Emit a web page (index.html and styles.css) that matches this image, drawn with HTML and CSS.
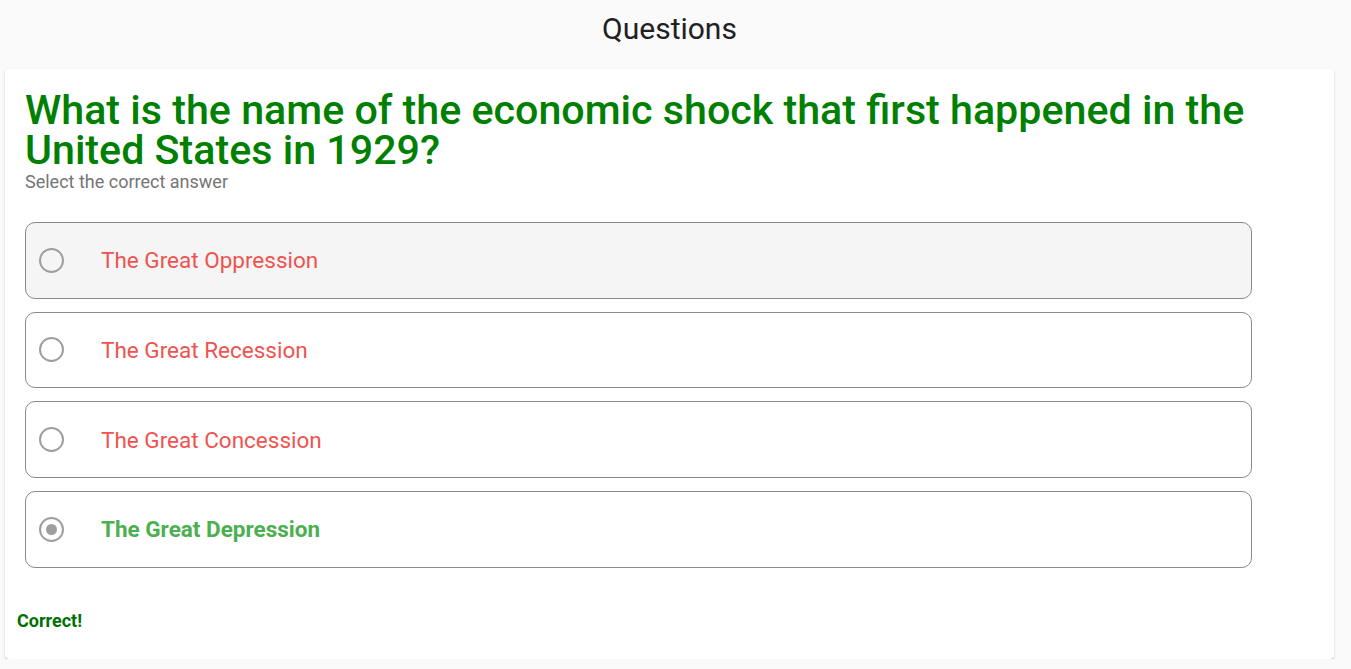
FILE: index.html
```html
<!DOCTYPE html>
<html lang="en">
<head>
<meta charset="utf-8">
<title>Questions</title>
<link rel="stylesheet" href="styles.css">
</head>
<body>
<div class="page">
  <header class="top">Questions</header>
  <main class="card">
    <h1 class="question">What is the name of the economic shock that first happened in the United States in 1929?</h1>
    <p class="hint">Select the correct answer</p>
    <div class="options">
      <label class="option hover">
        <span class="radio"></span>
        <span class="text wrong">The Great Oppression</span>
      </label>
      <label class="option">
        <span class="radio"></span>
        <span class="text wrong">The Great Recession</span>
      </label>
      <label class="option">
        <span class="radio"></span>
        <span class="text wrong">The Great Concession</span>
      </label>
      <label class="option">
        <span class="radio checked"></span>
        <span class="text right">The Great Depression</span>
      </label>
    </div>
    <div class="result">Correct!</div>
  </main>
</div>
</body>
</html>
```

FILE: styles.css
```css
* { box-sizing: border-box; }
html, body {
  margin: 0;
  padding: 0;
  background: #fafafa;
  font-family: Roboto, "Liberation Sans", sans-serif;
}
.page {
  padding: 0 17px 0 5px;
}
.top {
  height: 69px;
  display: flex;
  align-items: center;
  justify-content: center;
  font-size: 30px;
  color: #212121;
  padding-bottom: 12px;
}
.card {
  background: #fff;
  border-radius: 4px;
  box-shadow: 0 2px 1px -1px rgba(0,0,0,.2), 0 1px 1px 0 rgba(0,0,0,.14), 0 1px 3px 0 rgba(0,0,0,.12);
  padding: 21px 20px 30px 20px;
  height: 590px;
}
.question {
  margin: 0;
  font-size: 41.2px;
  line-height: 40px;
  font-weight: 500;
  color: #008000;
}
.hint {
  margin: 0;
  font-size: 18px;
  line-height: 24px;
  color: #757575;
}
.options {
  width: 1227px;
  margin-top: 28px;
  display: flex;
  flex-direction: column;
  gap: 13.2px;
}
.option {
  height: 76.5px;
  border: 1px solid #8a8a8a;
  border-radius: 10px;
  display: flex;
  align-items: center;
  padding-left: 13px;
}
.option.hover { background: #f5f5f5; }
.radio {
  width: 25px;
  height: 25px;
  border: 2px solid #9e9e9e;
  border-radius: 50%;
  display: flex;
  align-items: center;
  justify-content: center;
  flex: none;
}
.radio.checked::after {
  content: "";
  width: 11px;
  height: 11px;
  border-radius: 50%;
  background: #9e9e9e;
}
.text {
  margin-left: 37px;
  font-size: 22.5px;
}
.text.wrong { color: #ef5350; }
.text.right { color: #4caf50; font-weight: 700; }
.result {
  margin: 42px 0 0 -8px;
  font-size: 18px;
  font-weight: 700;
  color: #007000;
}
```
